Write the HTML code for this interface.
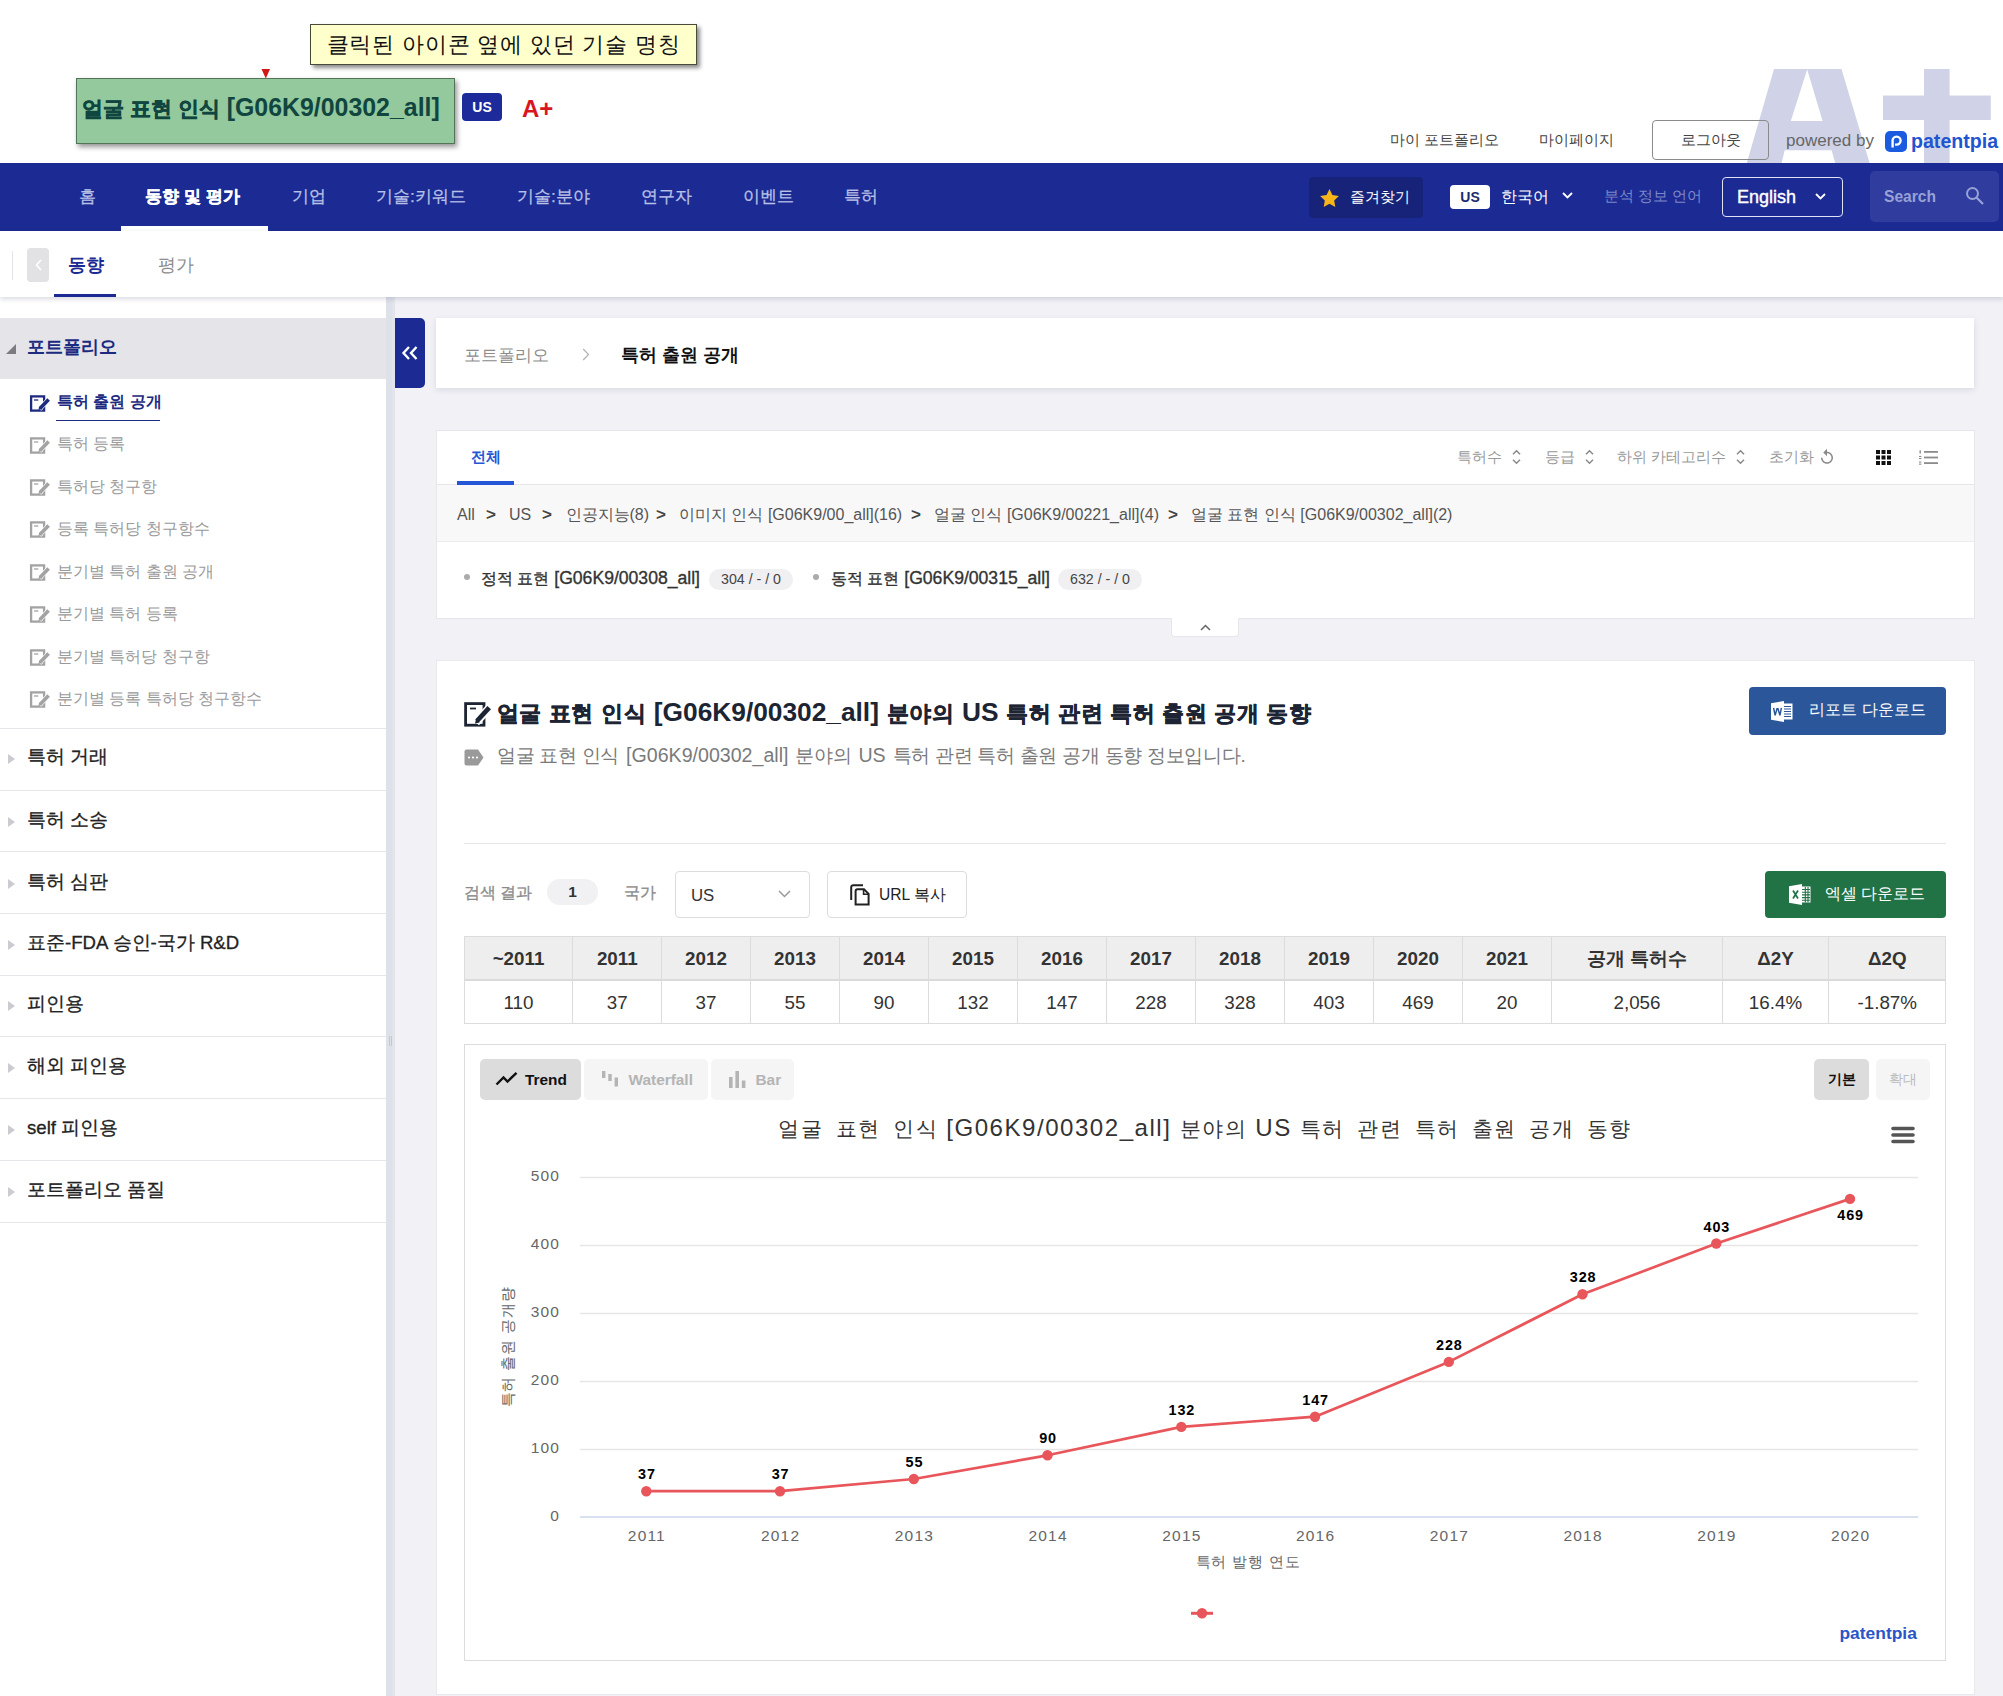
<!DOCTYPE html>
<html lang="ko">
<head>
<meta charset="utf-8">
<title>patentpia</title>
<style>
*{box-sizing:border-box;margin:0;padding:0}
html,body{width:2003px;height:1696px;overflow:hidden;background:#fff}
body{font-family:"Liberation Sans",sans-serif;color:#222;position:relative;-webkit-font-smoothing:antialiased}
.a{position:absolute;white-space:nowrap}
.c{display:flex;align-items:center;justify-content:center}
.l{display:flex;align-items:center}
svg{display:block;overflow:visible}

/* ---------- header ---------- */
#hdr{left:0;top:0;width:2003px;height:163px;background:#fff;overflow:hidden}
#yel{left:310px;top:24px;width:387px;height:41px;background:#ffffcc;border:1px solid #4a4a3a;box-shadow:3px 3px 4px rgba(0,0,0,.45);font-size:22px;letter-spacing:0.8px;color:#111}
#grn{left:76px;top:78px;width:379px;height:66px;background:#93c99c;border:1px solid #54745a;box-shadow:2px 3px 5px rgba(0,0,0,.42)}
#grn>span{left:5px;top:13.4px;font-size:24.9px;line-height:30px;font-weight:bold;color:#10463f}
#usb{left:462px;top:93px;width:40px;height:28px;background:#1c2a9a;border-radius:4px;color:#fff;font-size:14px;font-weight:bold}
#ap{left:522px;top:94px;height:30px;font-size:24px;font-weight:bold;color:#d9161f}
.tl{top:128px;height:24px;font-size:14.6px;color:#444}
#logout{left:1652px;top:120px;width:117px;height:40px;border:1px solid #8a8a8a;border-radius:4px;font-size:14.6px;color:#444;background:transparent}

/* ---------- nav ---------- */
#nav{left:0;top:163px;width:2003px;height:68px;background:#1c2b93}
.ni{top:0;height:66px;font-size:17.3px;color:#b9c0e6;-webkit-text-stroke:.25px #b9c0e6}
.ni.on{color:#fff;font-weight:bold;-webkit-text-stroke:.3px #fff}
#nul{left:121px;top:63px;width:147px;height:5px;background:#fff}
#fav{left:1309px;top:14px;width:114px;height:41px;background:#172378;border-radius:4px;color:#fff;font-size:15.4px}
#usw{left:1450px;top:22px;width:40px;height:24px;background:#fff;border-radius:4px;color:#1c2b6b;font-size:14px;font-weight:bold}
#eng{left:1722px;top:14px;width:121px;height:40px;border:1px solid #dfe3f5;border-radius:4px;color:#fff;font-size:18px;-webkit-text-stroke:0.4px #fff}
#srch{left:1870px;top:8px;width:129px;height:51px;background:#303d9f;border-radius:5px;color:#98a1d6;font-size:15.6px}

/* ---------- subnav ---------- */
#sub{left:0;top:231px;width:2003px;height:66px;background:#fff;box-shadow:0 2px 5px rgba(40,50,90,.18)}

/* ---------- page bg + sidebar ---------- */
#bg{left:0;top:297px;width:2003px;height:1399px;background:#f1f1f6}
#side{left:0;top:297px;width:386px;height:1399px;background:#fff}
#split{left:386px;top:297px;width:9px;height:1399px;background:linear-gradient(to right,#dde1e9 0,#dde1e9 6px,#e3e4eb 6px)}
#pf{left:0;top:318px;width:386px;height:61px;background:#e4e4e9}
#pf span{left:27px;top:-2px;height:60px;font-size:18.2px;font-weight:bold;color:#1c2a80}
.si{left:57px;height:28px;font-size:15.5px;color:#9a9a9a}
.si.on{color:#1c2a80;font-weight:bold}
.ico{left:29.5px}
.mi{left:27px;height:30px;font-size:18.6px;color:#222;-webkit-text-stroke:.3px #222}
.dv{left:0;width:386px;height:1px;background:#e6e6ea}
.tri{left:7.5px;width:0;height:0;border-left:7.5px solid #cbcbd1;border-top:5.3px solid transparent;border-bottom:5.3px solid transparent}

/* ---------- main ---------- */
#tog{left:395px;top:318px;width:30px;height:70px;background:#1c2b93;border-radius:0 5px 5px 0}
#bc{left:436px;top:318px;width:1538px;height:70px;background:#fff;box-shadow:0 2px 6px rgba(60,70,110,.13)}
#tabc{left:436px;top:430px;width:1539px;height:189px;background:#fff;border:1px solid #e6e7ec}
#path{left:0;top:53px;width:1537px;height:58px;background:#f8f8f9;border-top:1px solid #e6e6ea;border-bottom:1px solid #ececef}
.pt{top:499px;height:32px;font-size:16px;color:#555}
.pg{top:499px;height:32px;font-size:17px;color:#444;font-weight:bold}
.srt{top:441px;height:32px;font-size:14.6px;color:#999}
.cat{top:563.5px;height:30px;font-size:17.6px;color:#333;-webkit-text-stroke:0.35px #333}
.pill{top:569px;height:21px;border-radius:11px;background:#f0f0f2;font-size:14.2px;color:#444;padding-bottom:1.5px}
#mc{left:436px;top:660px;width:1539px;height:1035px;background:#fff;border:1px solid #e8e9ee}
#ttl{left:497px;top:696px;height:34px;font-size:26.3px;font-weight:bold;color:#1d2433}
#sttl{left:497px;top:742px;height:28px;font-size:19.6px;color:#7a7a7a}
.btn{border-radius:4px;color:#fff;font-size:16.4px}
.lbl{top:878.3px;height:30px;font-size:15.9px;color:#8a8a8a;-webkit-text-stroke:.3px #8a8a8a}
.box{top:871px;height:47px;border:1px solid #dcdcdc;border-radius:4px;background:#fff}

/* ---------- table ---------- */
#tb{left:464px;top:936px;width:1482px;height:88px;border:1px solid #dcdcdc;background:#fff}
#tbh{left:0;top:0;width:1480px;height:44px;background:#eeeeee;border-bottom:2px solid #dadada}
.th{top:937px;height:43px;font-size:18.8px;font-weight:bold;color:#333}
.td{top:981px;height:43px;font-size:18.8px;color:#333}
.vl{top:937px;width:1px;height:86px;background:#dcdcdc}
/* ---------- chart ---------- */
#ch{left:464px;top:1044px;width:1482px;height:617px;border:1px solid #dcdcdc;background:#fff}
.cb{top:1059px;height:41px;border-radius:5px;font-size:15.4px;font-weight:bold}
.yl{left:500px;width:60px;height:20px;text-align:right;font-size:15.5px;letter-spacing:1.1px;color:#666;line-height:20px}
.xl{top:1526px;width:80px;height:20px;text-align:center;font-size:15.5px;letter-spacing:1.2px;color:#666;line-height:20px}
.dl{width:60px;height:18px;text-align:center;font-size:14.4px;font-weight:bold;letter-spacing:0.9px;color:#000;line-height:18px}

/* hangul run sizing */
.kb{font-size:.85em}
.kr{font-size:19px;letter-spacing:-.3px;word-spacing:0}
#sttl{word-spacing:1.5px}
#ttl .kb{font-size:22.3px;letter-spacing:.45px;-webkit-text-stroke:.5px #1d2433}
#grn .kb{-webkit-text-stroke:.5px #10463f}
#ttl{word-spacing:.5px}
.kc{font-size:.89em}
.kt{font-size:21px;letter-spacing:1.5px;word-spacing:5px}
</style>
</head>
<body>
<div id="bg" class="a"></div><div id="side" class="a"></div><div id="split" class="a"></div>

<!-- ================= HEADER ================= -->
<div id="hdr" class="a">
  <svg class="a" style="left:0;top:0" width="2003" height="163" viewBox="0 0 2003 163"><path fill="#d0d3e7" fill-rule="evenodd" d="M1774 69H1841.5L1869.6 163H1835.2L1831.6 150.3H1784.7L1781.6 163H1746.8ZM1807.2 69.5L1822.6 121H1790.8Z"/><path fill="#d0d3e7" d="M1924 69H1949.6V95.4H1990.8V120H1949.6V163H1924V120H1883V95.4H1924Z"/></svg>
  <div class="a tl l" style="left:1390px">마이 포트폴리오</div>
  <div class="a tl l" style="left:1539px">마이페이지</div>
  <div id="logout" class="a c">로그아웃</div>
  <div class="a tl l" style="left:1786px;top:129px;font-size:17px;color:#666">powered by</div>
  <div class="a" style="left:1885px;top:131px;width:22px;height:21px;background:#1a5be0;border-radius:5px"></div>
  <svg class="a" style="left:1885px;top:131px" width="22" height="21" viewBox="0 0 22 21"><path d="M7.6 16.6V9.6a4 4 0 1 1 4 4H10" fill="none" stroke="#fff" stroke-width="2.4"/></svg>
  <div class="a l" style="left:1911px;top:128px;height:26px;font-size:19.6px;font-weight:bold;color:#1f55d0">patentpia</div>
</div>
<div id="yel" class="a c">클릭된 아이콘 옆에 있던 기술 명칭</div>
<svg class="a" style="left:261px;top:69px" width="10" height="10" viewBox="0 0 10 10"><path d="M0.5 0L9 0L4.8 9.5Z" fill="#d01818"/></svg>
<div id="grn" class="a"><span class="a"><span class="kb">얼굴 표현 인식</span> [G06K9/00302_all]</span></div>
<div id="usb" class="a c">US</div>
<div id="ap" class="a l">A+</div>

<!-- ================= NAV ================= -->
<div id="nav" class="a">
  <div class="a ni l" style="left:79px">홈</div>
  <div class="a ni l on" style="left:145px">동향 및 평가</div>
  <div class="a ni l" style="left:292px">기업</div>
  <div class="a ni l" style="left:376px">기술:키워드</div>
  <div class="a ni l" style="left:517px">기술:분야</div>
  <div class="a ni l" style="left:641px">연구자</div>
  <div class="a ni l" style="left:743px">이벤트</div>
  <div class="a ni l" style="left:844px">특허</div>
  <div id="nul" class="a"></div>
  <div id="fav" class="a l"><svg style="margin-left:11px;margin-right:11px" width="19" height="18" viewBox="0 0 24 23"><path d="M12 0l3.7 7.6 8.3 1.2-6 5.9 1.4 8.3L12 19l-7.4 4 1.4-8.3-6-5.9 8.3-1.2z" fill="#f6b619"/></svg>즐겨찾기</div>
  <div id="usw" class="a c">US</div>
  <div class="a l" style="left:1501px;top:14px;height:40px;font-size:16px;color:#fff">한국어</div>
  <svg class="a" style="left:1562px;top:29px" width="11" height="7" viewBox="0 0 11 7"><path d="M1 1l4.5 4.5L10 1" fill="none" stroke="#fff" stroke-width="1.8"/></svg>
  <div class="a l" style="left:1604px;top:14px;height:38px;font-size:15px;color:#7c88c8">분석 정보 언어</div>
  <div id="eng" class="a l"><span style="margin-left:14px">English</span></div>
  <svg class="a" style="left:1815px;top:30px" width="11" height="7" viewBox="0 0 11 7"><path d="M1 1l4.5 4.5L10 1" fill="none" stroke="#fff" stroke-width="1.8"/></svg>
  <div id="srch" class="a l"><span style="margin-left:14px;font-weight:bold">Search</span></div>
  <svg class="a" style="left:1965px;top:23px" width="20" height="20" viewBox="0 0 20 20"><circle cx="7.5" cy="7.5" r="5.5" fill="none" stroke="#98a1d6" stroke-width="2"/><path d="M11.5 11.5L18 18" stroke="#98a1d6" stroke-width="2.2"/></svg>
</div>

<!-- ================= SUBNAV ================= -->
<div id="sub" class="a">
  <div class="a" style="left:12px;top:20px;width:1px;height:29px;background:#e3e3e8"></div>
  <div class="a c" style="left:27px;top:17px;width:22px;height:34px;background:#e2e2e4;border-radius:4px"><svg width="7" height="12" viewBox="0 0 7 12"><path d="M6 1L1.5 6L6 11" fill="none" stroke="#fff" stroke-width="1.6"/></svg></div>
  <div class="a l" style="left:68px;top:16px;height:36px;font-size:17.5px;font-weight:bold;color:#1c2b93">동향</div>
  <div class="a l" style="left:158px;top:16px;height:36px;font-size:17.5px;color:#8c8c8c">평가</div>
  <div class="a" style="left:54px;top:63px;width:62px;height:3px;background:#1c2b93"></div>
</div>

<!-- ================= SIDEBAR ================= -->
<div class="a" style="left:388.5px;top:1036px;width:1px;height:10px;background:#c3c7d2"></div><div class="a" style="left:390.5px;top:1036px;width:1px;height:10px;background:#c3c7d2"></div>
<div id="pf" class="a"><svg class="a" style="left:6px;top:26px" width="10" height="10" viewBox="0 0 10 10"><path d="M10 0V10H0Z" fill="#7b7b80"/></svg><span class="a l">포트폴리오</span></div>
<svg class="a ico" style="top:394.5px" width="20" height="17" viewBox="0 0 20 17"><rect x="1.1" y="1.4" width="13" height="14.2" fill="none" stroke="#1c2a80" stroke-width="2.3"/><path d="M4 5H8.3" stroke="#1c2a80" stroke-width="1.3"/><path d="M9.4 14.2L19 4" stroke="#fff" stroke-width="4.8"/><path d="M10 13.4L18.6 4.4" stroke="#1c2a80" stroke-width="3.6"/><path d="M8.4 15l0.8-3.4 2.8 2.6z" fill="#1c2a80"/></svg>
<div class="a si l on" style="top:388.8px">특허 출원 공개</div>
<svg class="a ico" style="top:436.5px" width="20" height="17" viewBox="0 0 20 17"><rect x="1.1" y="1.4" width="13" height="14.2" fill="none" stroke="#a3a3a3" stroke-width="2.3"/><path d="M4 5H8.3" stroke="#a3a3a3" stroke-width="1.3"/><path d="M9.4 14.2L19 4" stroke="#fff" stroke-width="4.8"/><path d="M10 13.4L18.6 4.4" stroke="#a3a3a3" stroke-width="3.6"/><path d="M8.4 15l0.8-3.4 2.8 2.6z" fill="#a3a3a3"/></svg>
<div class="a si l" style="top:430.8px">특허 등록</div>
<svg class="a ico" style="top:478.9px" width="20" height="17" viewBox="0 0 20 17"><rect x="1.1" y="1.4" width="13" height="14.2" fill="none" stroke="#a3a3a3" stroke-width="2.3"/><path d="M4 5H8.3" stroke="#a3a3a3" stroke-width="1.3"/><path d="M9.4 14.2L19 4" stroke="#fff" stroke-width="4.8"/><path d="M10 13.4L18.6 4.4" stroke="#a3a3a3" stroke-width="3.6"/><path d="M8.4 15l0.8-3.4 2.8 2.6z" fill="#a3a3a3"/></svg>
<div class="a si l" style="top:473.2px">특허당 청구항</div>
<svg class="a ico" style="top:521.3px" width="20" height="17" viewBox="0 0 20 17"><rect x="1.1" y="1.4" width="13" height="14.2" fill="none" stroke="#a3a3a3" stroke-width="2.3"/><path d="M4 5H8.3" stroke="#a3a3a3" stroke-width="1.3"/><path d="M9.4 14.2L19 4" stroke="#fff" stroke-width="4.8"/><path d="M10 13.4L18.6 4.4" stroke="#a3a3a3" stroke-width="3.6"/><path d="M8.4 15l0.8-3.4 2.8 2.6z" fill="#a3a3a3"/></svg>
<div class="a si l" style="top:515.6px">등록 특허당 청구항수</div>
<svg class="a ico" style="top:563.7px" width="20" height="17" viewBox="0 0 20 17"><rect x="1.1" y="1.4" width="13" height="14.2" fill="none" stroke="#a3a3a3" stroke-width="2.3"/><path d="M4 5H8.3" stroke="#a3a3a3" stroke-width="1.3"/><path d="M9.4 14.2L19 4" stroke="#fff" stroke-width="4.8"/><path d="M10 13.4L18.6 4.4" stroke="#a3a3a3" stroke-width="3.6"/><path d="M8.4 15l0.8-3.4 2.8 2.6z" fill="#a3a3a3"/></svg>
<div class="a si l" style="top:558.0px">분기별 특허 출원 공개</div>
<svg class="a ico" style="top:606.1px" width="20" height="17" viewBox="0 0 20 17"><rect x="1.1" y="1.4" width="13" height="14.2" fill="none" stroke="#a3a3a3" stroke-width="2.3"/><path d="M4 5H8.3" stroke="#a3a3a3" stroke-width="1.3"/><path d="M9.4 14.2L19 4" stroke="#fff" stroke-width="4.8"/><path d="M10 13.4L18.6 4.4" stroke="#a3a3a3" stroke-width="3.6"/><path d="M8.4 15l0.8-3.4 2.8 2.6z" fill="#a3a3a3"/></svg>
<div class="a si l" style="top:600.4px">분기별 특허 등록</div>
<svg class="a ico" style="top:648.7px" width="20" height="17" viewBox="0 0 20 17"><rect x="1.1" y="1.4" width="13" height="14.2" fill="none" stroke="#a3a3a3" stroke-width="2.3"/><path d="M4 5H8.3" stroke="#a3a3a3" stroke-width="1.3"/><path d="M9.4 14.2L19 4" stroke="#fff" stroke-width="4.8"/><path d="M10 13.4L18.6 4.4" stroke="#a3a3a3" stroke-width="3.6"/><path d="M8.4 15l0.8-3.4 2.8 2.6z" fill="#a3a3a3"/></svg>
<div class="a si l" style="top:643.0px">분기별 특허당 청구항</div>
<svg class="a ico" style="top:691.1px" width="20" height="17" viewBox="0 0 20 17"><rect x="1.1" y="1.4" width="13" height="14.2" fill="none" stroke="#a3a3a3" stroke-width="2.3"/><path d="M4 5H8.3" stroke="#a3a3a3" stroke-width="1.3"/><path d="M9.4 14.2L19 4" stroke="#fff" stroke-width="4.8"/><path d="M10 13.4L18.6 4.4" stroke="#a3a3a3" stroke-width="3.6"/><path d="M8.4 15l0.8-3.4 2.8 2.6z" fill="#a3a3a3"/></svg>
<div class="a si l" style="top:685.4px">분기별 등록 특허당 청구항수</div>
<div class="a" style="left:56px;top:419.5px;width:104px;height:1.6px;background:#1c2a80"></div>
<div class="a dv" style="top:728px"></div>
<div class="a dv" style="top:790px"></div>
<div class="a dv" style="top:851px"></div>
<div class="a dv" style="top:913px"></div>
<div class="a dv" style="top:975px"></div>
<div class="a dv" style="top:1036px"></div>
<div class="a dv" style="top:1098px"></div>
<div class="a dv" style="top:1160px"></div>
<div class="a dv" style="top:1222px"></div>
<div class="a tri" style="top:754.4px"></div><div class="a mi l" style="top:742.4px">특허 거래</div>
<div class="a tri" style="top:816.6px"></div><div class="a mi l" style="top:804.6px">특허 소송</div>
<div class="a tri" style="top:878.6px"></div><div class="a mi l" style="top:866.6px">특허 심판</div>
<div class="a tri" style="top:940.2px"></div><div class="a mi l" style="top:928.2px">표준-FDA 승인-국가 R&amp;D</div>
<div class="a tri" style="top:1001.2px"></div><div class="a mi l" style="top:989.2px">피인용</div>
<div class="a tri" style="top:1063.4px"></div><div class="a mi l" style="top:1051.4px">해외 피인용</div>
<div class="a tri" style="top:1125.3px"></div><div class="a mi l" style="top:1113.3px">self 피인용</div>
<div class="a tri" style="top:1186.6px"></div><div class="a mi l" style="top:1174.6px">포트폴리오 품질</div>
<!-- ================= MAIN ================= -->
<div id="tog" class="a c"><svg width="16" height="14" viewBox="0 0 16 14"><path d="M7 1L1.5 7L7 13M14.5 1L9 7L14.5 13" fill="none" stroke="#fff" stroke-width="2.4"/></svg></div>
<div id="bc" class="a"></div>
<div class="a l" style="left:464px;top:338px;height:34px;font-size:17.4px;color:#8c8c8c">포트폴리오</div>
<svg class="a" style="left:582px;top:348px" width="8" height="13" viewBox="0 0 8 13"><path d="M1.2 1L6.5 6.5L1.2 12" fill="none" stroke="#b5b5b5" stroke-width="1.3"/></svg>
<div class="a l" style="left:621px;top:338px;height:34px;font-size:17.6px;font-weight:bold;color:#111">특허 출원 공개</div>
<div id="tabc" class="a"><div id="path" class="a"></div></div>
<div class="a l" style="left:471px;top:441px;height:32px;font-size:15.2px;font-weight:bold;color:#2456d6">전체</div>
<div class="a" style="left:457px;top:481px;width:57px;height:4px;background:#2456d6"></div>
<div class="a srt l" style="left:1457px">특허수</div>
<svg class="a" style="left:1512px;top:449px" width="9" height="16" viewBox="0 0 9 16"><path d="M1 5.2L4.5 1.7L8 5.2M1 10.8L4.5 14.3L8 10.8" fill="none" stroke="#8a8a8a" stroke-width="1.5"/></svg>
<div class="a srt l" style="left:1545px">등급</div>
<svg class="a" style="left:1585px;top:449px" width="9" height="16" viewBox="0 0 9 16"><path d="M1 5.2L4.5 1.7L8 5.2M1 10.8L4.5 14.3L8 10.8" fill="none" stroke="#8a8a8a" stroke-width="1.5"/></svg>
<div class="a srt l" style="left:1617px">하위 카테고리수</div>
<svg class="a" style="left:1735.5px;top:449px" width="9" height="16" viewBox="0 0 9 16"><path d="M1 5.2L4.5 1.7L8 5.2M1 10.8L4.5 14.3L8 10.8" fill="none" stroke="#8a8a8a" stroke-width="1.5"/></svg>
<div class="a srt l" style="left:1769px">초기화</div>
<svg class="a" style="left:1818px;top:447px" width="18" height="20" viewBox="0 0 24 24"><path d="M12 5V1L7 6l5 5V7c3.3 0 6 2.7 6 6s-2.7 6-6 6-6-2.7-6-6H4c0 4.4 3.6 8 8 8s8-3.6 8-8-3.6-8-8-8z" fill="#8a8a8a"/></svg>
<svg class="a" style="left:1876px;top:450px" width="15" height="15" viewBox="0 0 15 15"><g fill="#111"><rect x="0" y="0" width="4" height="4"/><rect x="5.5" y="0" width="4" height="4"/><rect x="11" y="0" width="4" height="4"/><rect x="0" y="5.5" width="4" height="4"/><rect x="5.5" y="5.5" width="4" height="4"/><rect x="11" y="5.5" width="4" height="4"/><rect x="0" y="11" width="4" height="4"/><rect x="5.5" y="11" width="4" height="4"/><rect x="11" y="11" width="4" height="4"/></g></svg>
<svg class="a" style="left:1919px;top:450px" width="19" height="15" viewBox="0 0 19 15"><g fill="#8c8c8c"><rect x="5" y="1" width="14" height="1.8"/><rect x="5" y="6.6" width="14" height="1.8"/><rect x="5" y="12.2" width="14" height="1.8"/><rect x="0.5" y="0.3" width="1.4" height="3.2"/><rect x="0" y="5.9" width="2.4" height="1.1"/><rect x="0" y="8" width="2.4" height="1.1"/><rect x="0" y="11.5" width="2.4" height="1.1"/><rect x="0" y="13.6" width="2.4" height="1.1"/></g></svg>
<div class="a pt l" style="left:457px">All</div><div class="a pg l" style="left:486px">&gt;</div>
<div class="a pt l" style="left:509px">US</div><div class="a pg l" style="left:542px">&gt;</div>
<div class="a pt l" style="left:565.5px">인공지능(8)</div><div class="a pg l" style="left:656px">&gt;</div>
<div class="a pt l" style="left:679px">이미지 인식 [G06K9/00_all](16)</div><div class="a pg l" style="left:911px">&gt;</div>
<div class="a pt l" style="left:934px">얼굴 인식 [G06K9/00221_all](4)</div><div class="a pg l" style="left:1168px">&gt;</div>
<div class="a pt l" style="left:1191px">얼굴 표현 인식 [G06K9/00302_all](2)</div>
<div class="a" style="left:463.5px;top:573.8px;width:6px;height:6px;border-radius:50%;background:#ababab"></div>
<div class="a cat l" style="left:481px"><span><span class="kc">정적 표현</span> [G06K9/00308_all]</span></div>
<div class="a pill c" style="left:709px;width:84px">304 / - / 0</div>
<div class="a" style="left:813px;top:573.8px;width:6px;height:6px;border-radius:50%;background:#ababab"></div>
<div class="a cat l" style="left:831px"><span><span class="kc">동적 표현</span> [G06K9/00315_all]</span></div>
<div class="a pill c" style="left:1058px;width:84px">632 / - / 0</div>
<div class="a c" style="left:1171px;top:618px;width:68px;height:19px;background:#fff;border:1px solid #e6e7ec;border-top:0;border-radius:0 0 4px 4px"><svg width="11" height="7" viewBox="0 0 11 7"><path d="M1 6L5.5 1.5L10 6" fill="none" stroke="#666" stroke-width="1.5"/></svg></div>
<div id="mc" class="a"></div>
<svg class="a" style="left:463.5px;top:700.5px" width="28" height="26" viewBox="0 0 28 26"><rect x="1.6" y="2.6" width="18.4" height="21.6" fill="none" stroke="#1d2433" stroke-width="2.8"/><path d="M6 7.5H12" stroke="#1d2433" stroke-width="1.8"/><path d="M12 21.5L26 6" stroke="#fff" stroke-width="8"/><path d="M13 20L25.2 6.6" stroke="#1d2433" stroke-width="4.8"/><path d="M11 22.6l1-4.6 3.6 3.4z" fill="#1d2433"/></svg>
<div id="ttl" class="a l"><span><span class="kb">얼굴 표현 인식</span> [G06K9/00302_all] <span class="kb">분야의</span> US <span class="kb">특허 관련 특허 출원 공개 동향</span></span></div>
<svg class="a" style="left:464px;top:749px" width="20" height="17" viewBox="0 0 20 17"><path d="M2.5 0.5H14L19.5 8.5L14 16.5H2.5A2 2 0 0 1 0.5 14.5V2.5A2 2 0 0 1 2.5 0.5Z" fill="#9a9a9a"/><circle cx="5" cy="8.5" r="1.1" fill="#fff"/><circle cx="9" cy="8.5" r="1.1" fill="#fff"/><circle cx="13" cy="8.5" r="1.1" fill="#fff"/></svg>
<div id="sttl" class="a l"><span><span class="kr">얼굴 표현 인식</span> [G06K9/00302_all] <span class="kr">분야의</span> US <span class="kr">특허 관련 특허 출원 공개 동향 정보입니다.</span></span></div>
<div class="a btn l" style="left:1749px;top:687px;width:197px;height:48px;background:#2b579a"><span class="a" style="left:60px;top:0;height:46px;display:flex;align-items:center">리포트 다운로드</span></div>
<svg class="a" style="left:1771px;top:701px" width="22" height="21" viewBox="0 0 22 21"><rect x="9" y="2.5" width="12.5" height="16" fill="#fff"/><g stroke="#2b579a" stroke-width="1.1"><path d="M13 5.5H20M13 8H20M13 10.5H20M13 13H20M13 15.5H20"/></g><path d="M0 2.2L13 0V21L0 18.8Z" fill="#fff"/><path d="M2.6 6.8l1.5 7.6 1.9-6.6h1l1.9 6.6 1.5-7.6" fill="none" stroke="#2b579a" stroke-width="1.5"/></svg>
<div class="a" style="left:464px;top:843px;width:1482px;height:1px;background:#e6e6e6"></div>
<div class="a lbl l" style="left:464px">검색 결과</div>
<div class="a c" style="left:547px;top:879px;width:51px;height:26px;border-radius:13px;background:#f1f1f3;font-size:15.5px;font-weight:bold;color:#333">1</div>
<div class="a lbl l" style="left:624px">국가</div>
<div class="a box l" style="left:675px;width:135px"><span style="margin-left:15px;margin-top:2px;font-size:16.8px;color:#333">US</span></div>
<svg class="a" style="left:778px;top:890px" width="13" height="8" viewBox="0 0 13 8"><path d="M1 1L6.5 6.5L12 1" fill="none" stroke="#9a9a9a" stroke-width="1.5"/></svg>
<div class="a box" style="left:827px;width:140px"></div>
<svg class="a" style="left:850px;top:883.5px" width="20" height="22" viewBox="0 0 20 22"><path d="M13 1.2H3.2A2 2 0 0 0 1.2 3.2V16" fill="none" stroke="#222" stroke-width="2"/><path d="M7.5 5.2H14L18.6 9.8V20.6H5.6V7.2A2 2 0 0 1 7.5 5.2Z" fill="#fff" stroke="#222" stroke-width="2"/><path d="M13.6 5.4V10.2H18.4" fill="none" stroke="#222" stroke-width="1.6"/></svg>
<div class="a l" style="left:879px;top:879px;height:32px;font-size:15.6px;color:#222">URL 복사</div>
<div class="a btn" style="left:1765px;top:871px;width:181px;height:47px;background:#217346"><span class="a" style="left:59.5px;top:0;height:46px;display:flex;align-items:center">엑셀 다운로드</span></div>
<svg class="a" style="left:1788.5px;top:884px" width="22" height="21" viewBox="0 0 22 21"><rect x="9" y="2.5" width="12.5" height="16" fill="#fff"/><g stroke="#217346" stroke-width="1.1"><path d="M13 5.5H21M13 8.2H21M13 10.9H21M13 13.6H21M13 16.3H21M16.3 3V18.5M19 3V18.5"/></g><path d="M0 2.2L13 0V21L0 18.8Z" fill="#fff"/><path d="M4 6.5l5 8M9 6.5l-5 8" stroke="#217346" stroke-width="1.7"/></svg>
<div id="tb" class="a"><div id="tbh" class="a"></div></div>
<div class="a th c" style="left:464px;width:109px">~2011</div><div class="a td c" style="left:464px;width:109px">110</div>
<div class="a th c" style="left:573px;width:88.5px">2011</div><div class="a td c" style="left:573px;width:88.5px">37</div>
<div class="a vl" style="left:572px"></div>
<div class="a th c" style="left:661.5px;width:89.0px">2012</div><div class="a td c" style="left:661.5px;width:89.0px">37</div>
<div class="a vl" style="left:661px"></div>
<div class="a th c" style="left:750.5px;width:89.0px">2013</div><div class="a td c" style="left:750.5px;width:89.0px">55</div>
<div class="a vl" style="left:750px"></div>
<div class="a th c" style="left:839.5px;width:89.0px">2014</div><div class="a td c" style="left:839.5px;width:89.0px">90</div>
<div class="a vl" style="left:839px"></div>
<div class="a th c" style="left:928.5px;width:89.0px">2015</div><div class="a td c" style="left:928.5px;width:89.0px">132</div>
<div class="a vl" style="left:928px"></div>
<div class="a th c" style="left:1017.5px;width:89.0px">2016</div><div class="a td c" style="left:1017.5px;width:89.0px">147</div>
<div class="a vl" style="left:1017px"></div>
<div class="a th c" style="left:1106.5px;width:89.0px">2017</div><div class="a td c" style="left:1106.5px;width:89.0px">228</div>
<div class="a vl" style="left:1106px"></div>
<div class="a th c" style="left:1195.5px;width:89.0px">2018</div><div class="a td c" style="left:1195.5px;width:89.0px">328</div>
<div class="a vl" style="left:1195px"></div>
<div class="a th c" style="left:1284.5px;width:89.0px">2019</div><div class="a td c" style="left:1284.5px;width:89.0px">403</div>
<div class="a vl" style="left:1284px"></div>
<div class="a th c" style="left:1373.5px;width:89.0px">2020</div><div class="a td c" style="left:1373.5px;width:89.0px">469</div>
<div class="a vl" style="left:1373px"></div>
<div class="a th c" style="left:1462.5px;width:89.0px">2021</div><div class="a td c" style="left:1462.5px;width:89.0px">20</div>
<div class="a vl" style="left:1462px"></div>
<div class="a th c" style="left:1551.5px;width:171.0px">공개 특허수</div><div class="a td c" style="left:1551.5px;width:171.0px">2,056</div>
<div class="a vl" style="left:1551px"></div>
<div class="a th c" style="left:1722.5px;width:106.0px">Δ2Y</div><div class="a td c" style="left:1722.5px;width:106.0px">16.4%</div>
<div class="a vl" style="left:1722px"></div>
<div class="a th c" style="left:1828.5px;width:117.5px">Δ2Q</div><div class="a td c" style="left:1828.5px;width:117.5px">-1.87%</div>
<div class="a vl" style="left:1828px"></div>
<div id="ch" class="a"></div>
<div class="a cb" style="left:480px;width:101px;background:#dcdcdc;color:#111"><span class="a l" style="left:45px;top:0;height:41px">Trend</span></div>
<svg class="a" style="left:495px;top:1071px" width="23" height="16" viewBox="0 0 23 16"><path d="M1.5 13.5L8.5 6.5L12.5 10.5L21.5 1.8" fill="none" stroke="#111" stroke-width="2.4" stroke-linejoin="miter"/></svg>
<div class="a cb" style="left:584px;width:124px;background:#f5f5f5;color:#b4b4b4"><span class="a l" style="left:44.5px;top:0;height:41px">Waterfall</span></div>
<svg class="a" style="left:602px;top:1071px" width="17" height="16" viewBox="0 0 17 16"><g fill="#b4b4b4"><rect x="0" y="0" width="3.4" height="7"/><rect x="6.3" y="3" width="3.4" height="7"/><rect x="12.6" y="6.5" width="3.4" height="9"/></g></svg>
<div class="a cb" style="left:711px;width:83px;background:#f5f5f5;color:#b4b4b4"><span class="a l" style="left:44.5px;top:0;height:41px">Bar</span></div>
<svg class="a" style="left:729px;top:1071px" width="17" height="17" viewBox="0 0 17 17"><g fill="#b4b4b4"><rect x="0" y="6" width="3.6" height="11"/><rect x="6.4" y="0" width="3.6" height="17"/><rect x="12.8" y="9.5" width="3.6" height="7.5"/></g></svg>
<div class="a cb c" style="left:1814px;width:55px;background:#dcdcdc;color:#111;font-size:14.4px">기본</div>
<div class="a cb c" style="left:1876px;width:54px;background:#f5f5f5;color:#bbb;font-size:14.4px;font-weight:normal">확대</div>
<div class="a c" style="left:705px;top:1110px;width:1000px;height:36px;font-size:24.1px;letter-spacing:1.5px;color:#333" id="ctt"><span><span class="kt">얼굴 표현 인식</span> [G06K9/00302_all] <span class="kt">분야의</span> US <span class="kt">특허 관련 특허 출원 공개 동향</span></span></div>
<svg class="a" style="left:1891px;top:1126px" width="24" height="18" viewBox="0 0 24 18"><g stroke="#555" stroke-width="3.6" stroke-linecap="round"><path d="M2 2.5H22M2 9H22M2 15.5H22"/></g></svg>
<svg class="a" style="left:0;top:1160px" width="2003" height="480" viewBox="0 1160 2003 480"><path d="M580 1177.5H1918" stroke="#e6e6e6" stroke-width="1.3"/><path d="M580 1245.5H1918" stroke="#e6e6e6" stroke-width="1.3"/><path d="M580 1313.5H1918" stroke="#e6e6e6" stroke-width="1.3"/><path d="M580 1381.5H1918" stroke="#e6e6e6" stroke-width="1.3"/><path d="M580 1449.5H1918" stroke="#e6e6e6" stroke-width="1.3"/><path d="M580 1517H1918" stroke="#ccd6eb" stroke-width="1.6"/><polyline points="646.3,1491.2 780.0,1491.2 913.8,1479.0 1047.5,1455.3 1181.3,1426.9 1315.0,1416.7 1448.8,1361.9 1582.5,1294.3 1716.3,1243.5 1850.0,1198.9" fill="none" stroke="#e8565b" stroke-width="2.7" stroke-linejoin="round"/><circle cx="646.3" cy="1491.2" r="5.2" fill="#e8565b"/><circle cx="780.0" cy="1491.2" r="5.2" fill="#e8565b"/><circle cx="913.8" cy="1479.0" r="5.2" fill="#e8565b"/><circle cx="1047.5" cy="1455.3" r="5.2" fill="#e8565b"/><circle cx="1181.3" cy="1426.9" r="5.2" fill="#e8565b"/><circle cx="1315.0" cy="1416.7" r="5.2" fill="#e8565b"/><circle cx="1448.8" cy="1361.9" r="5.2" fill="#e8565b"/><circle cx="1582.5" cy="1294.3" r="5.2" fill="#e8565b"/><circle cx="1716.3" cy="1243.5" r="5.2" fill="#e8565b"/><circle cx="1850.0" cy="1198.9" r="5.2" fill="#e8565b"/><path d="M1191 1613.3H1213" stroke="#e8565b" stroke-width="3"/><circle cx="1202" cy="1613.3" r="5.2" fill="#e8565b"/></svg>
<div class="a yl" style="top:1166.2px">500</div>
<div class="a yl" style="top:1234.2px">400</div>
<div class="a yl" style="top:1302.2px">300</div>
<div class="a yl" style="top:1370.2px">200</div>
<div class="a yl" style="top:1438.2px">100</div>
<div class="a yl" style="top:1506.2px">0</div>
<div class="a xl" style="left:606.9px">2011</div>
<div class="a xl" style="left:740.6px">2012</div>
<div class="a xl" style="left:874.4px">2013</div>
<div class="a xl" style="left:1008.1px">2014</div>
<div class="a xl" style="left:1141.9px">2015</div>
<div class="a xl" style="left:1275.6px">2016</div>
<div class="a xl" style="left:1409.4px">2017</div>
<div class="a xl" style="left:1543.1px">2018</div>
<div class="a xl" style="left:1676.9px">2019</div>
<div class="a xl" style="left:1810.6px">2020</div>
<div class="a dl" style="left:616.9px;top:1465.2px">37</div>
<div class="a dl" style="left:750.6px;top:1465.2px">37</div>
<div class="a dl" style="left:884.4px;top:1453.0px">55</div>
<div class="a dl" style="left:1018.1px;top:1429.3px">90</div>
<div class="a dl" style="left:1151.9px;top:1400.9px">132</div>
<div class="a dl" style="left:1285.6px;top:1390.7px">147</div>
<div class="a dl" style="left:1419.4px;top:1335.9px">228</div>
<div class="a dl" style="left:1553.1px;top:1268.3px">328</div>
<div class="a dl" style="left:1686.9px;top:1217.5px">403</div>
<div class="a dl" style="left:1820.6px;top:1206.4px">469</div>
<div class="a c" style="left:1148px;top:1550px;width:200px;height:24px;font-size:15.4px;letter-spacing:0.8px;color:#666">특허 발행 연도</div>
<div class="a c" style="left:428px;top:1335px;width:160px;height:24px;font-size:15.4px;letter-spacing:0.8px;color:#666;transform:rotate(-90deg)">특허 출원 공개량</div>
<div class="a l" style="left:1839.5px;top:1621px;height:24px;font-size:17.4px;font-weight:bold;color:#2a55c8">patentpia</div>
</body>
</html>
